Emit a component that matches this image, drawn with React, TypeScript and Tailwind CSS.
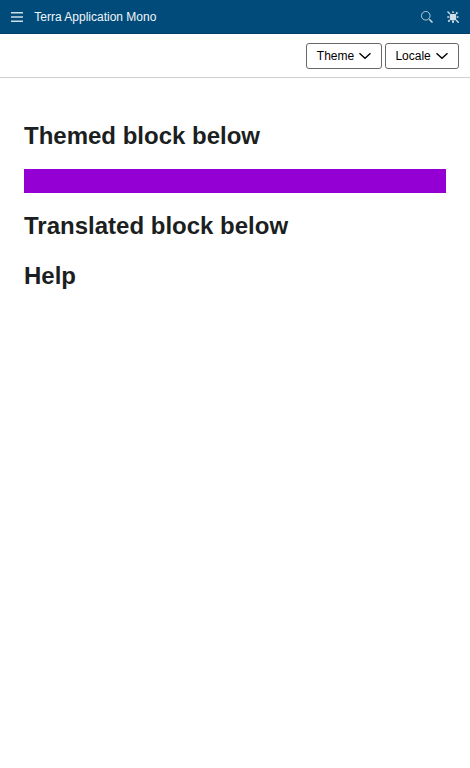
import React from 'react';

function MenuIcon() {
  return (
    <svg className="h-3 w-3" viewBox="0 0 48 48" fill="currentColor">
      <path d="M0 4h48v6H0zM0 21h48v6H0zM0 38h48v6H0z" />
    </svg>
  );
}

function SearchIcon() {
  return (
    <svg className="h-3 w-3" viewBox="0 0 48 48" fill="none" stroke="currentColor">
      <circle cx="19" cy="19" r="17.3" strokeWidth="3.4" />
      <path d="M31 31l4 4" strokeWidth="3" />
      <path d="M34 34l12 12" strokeWidth="6" />
    </svg>
  );
}

function BurstIcon() {
  return (
    <svg className="h-3 w-3" viewBox="0 0 48 48" fill="none" stroke="currentColor">
      <rect x="11.5" y="11.5" width="25" height="25" rx="3" fill="currentColor" stroke="none" />
      <path d="M24 1v7M1 24h8M39 24h7" strokeWidth="6" />
      <path d="M24 38v9" strokeWidth="8" />
      <path d="M36 11l6-5M11 37l-6 5" strokeWidth="7" />
      <path d="M2 2l10 10M36 36l11 11" strokeWidth="5.5" />
    </svg>
  );
}

function DropdownButton({ label, className }: { label: string; className: string }) {
  return (
    <button
      type="button"
      className={`flex h-[26px] items-center justify-between rounded-[3px] border border-[#64696c] bg-white pr-[10px] text-xs leading-4 text-black ${className}`}
    >
      <span>{label}</span>
      <svg className="h-3 w-3" viewBox="0 0 48 48" fill="none" stroke="currentColor" strokeWidth="5.5">
        <path d="M2 13l22 20 22-20" />
      </svg>
    </button>
  );
}

export default function App() {
  return (
    <div className="flex h-screen flex-col bg-white font-['Liberation_Sans',Arial,sans-serif]">
      <header className="flex h-[34px] shrink-0 items-center border-b border-[#00406a] bg-[#004b79] pr-[11px] pl-[11px] text-[#d0dee8]">
        <button type="button" aria-label="Menu">
          <MenuIcon />
        </button>
        <span className="ml-[11.3px] text-xs leading-4 text-[#f2f6f9]">Terra Application Mono</span>
        <div className="ml-auto flex items-center gap-[14px]">
          <SearchIcon />
          <BurstIcon />
        </div>
      </header>
      <div className="flex h-11 shrink-0 items-center justify-end gap-[3px] border-b border-[#cdcfd0] pr-[11px]">
        <DropdownButton label="Theme" className="w-[76px] pl-[9.8px]" />
        <DropdownButton label="Locale" className="w-[74px] pl-[9.4px]" />
      </div>
      <main className="px-6 pt-[43px] text-[#1c1f21]">
        <h2 className="text-2xl leading-[30px] font-bold">Themed block below</h2>
        <div className="mt-[18px] h-6 bg-[#9400d3]" />
        <h2 className="mt-[18px] text-2xl leading-[30px] font-bold">Translated block below</h2>
        <h2 className="mt-5 text-2xl leading-[30px] font-bold">Help</h2>
      </main>
    </div>
  );
}
